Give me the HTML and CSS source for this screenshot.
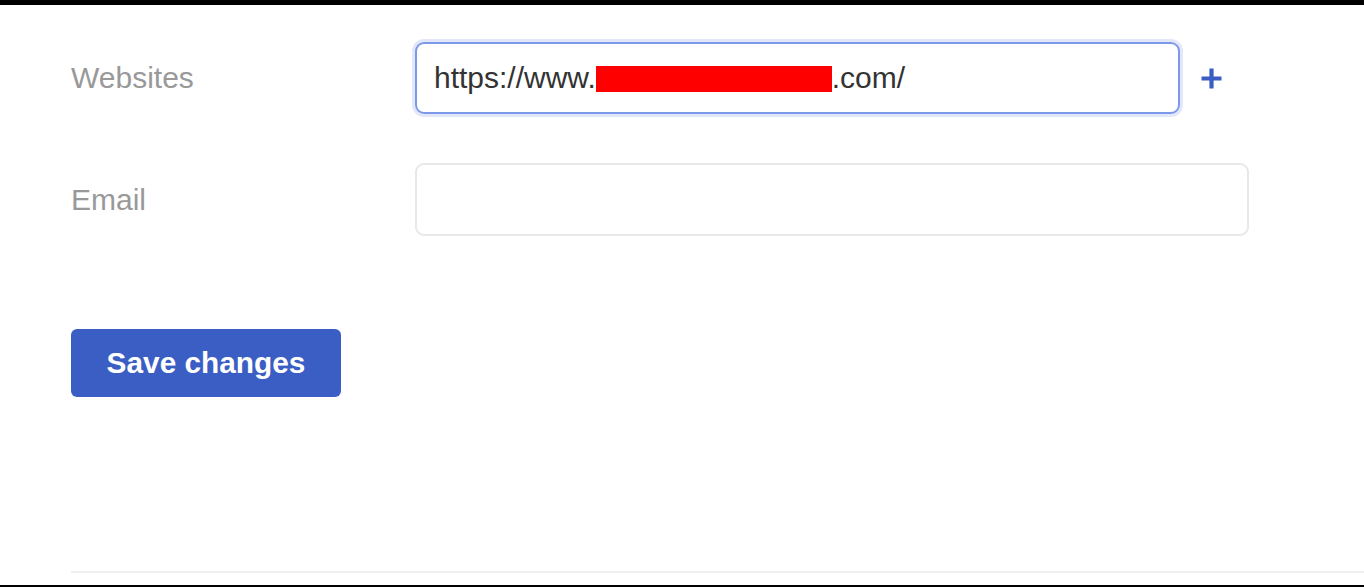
FILE: index.html
```html
<!DOCTYPE html>
<html lang="en">
<head>
<meta charset="utf-8">
<title>Settings</title>
<link rel="stylesheet" href="styles.css">
</head>
<body>
<div class="topbar"></div>
<main class="page">
  <form class="form">
    <div class="row row-websites">
      <label class="label">Websites</label>
      <div class="field-group">
        <div class="input input-focus"><span class="val">https://www.</span><span class="redact"></span><span class="val">.com/</span></div>
        <button type="button" class="add" aria-label="Add website">
          <svg width="23" height="23" viewBox="0 0 23 23"><path d="M11.5 1.5v20M1.5 11.5h20" stroke="#3b5dc4" stroke-width="4.2" stroke-linecap="butt" fill="none"/></svg>
        </button>
      </div>
    </div>
    <div class="row row-email">
      <label class="label">Email</label>
      <div class="field-group">
        <div class="input input-email"></div>
      </div>
    </div>
    <div class="actions">
      <button type="button" class="save">Save changes</button>
    </div>
  </form>
  <div class="divider"></div>
</main>
<div class="bottombar"></div>
</body>
</html>
```

FILE: styles.css
```css
html, body {
  margin: 0;
  padding: 0;
  background: #fff;
  font-family: "Liberation Sans", Arial, sans-serif;
}
.topbar {
  height: 5px;
  background: #000;
}
.page {
  padding-left: 71px;
  height: 580px;
  display: flex;
  flex-direction: column;
}
.form {
  display: flex;
  flex-direction: column;
  padding-top: 37px;
}
.row {
  display: flex;
  align-items: center;
}
.row-email {
  margin-top: 49px;
}
.label {
  width: 344px;
  flex: none;
  font-size: 30px;
  color: #999;
}
.field-group {
  display: flex;
  align-items: center;
}
.input {
  box-sizing: border-box;
  height: 72px;
  border: 2px solid #e6e6e6;
  border-radius: 9px;
  display: flex;
  align-items: center;
  padding-left: 17px;
  font-size: 30px;
  color: #333;
}
.input-focus {
  width: 765px;
  border-color: #7d98ea;
  box-shadow: 0 0 0 3px rgba(125, 152, 234, 0.22);
}
.input-email {
  width: 834px;
  height: 73px;
  border-color: #e8e8e8;
}
.redact {
  display: inline-block;
  width: 236px;
  height: 26px;
  background: #ff0000;
  margin-top: 1px;
}
.add {
  margin-left: 20px;
  padding: 0;
  border: 0;
  background: none;
  width: 23px;
  height: 23px;
  display: flex;
}
.actions {
  margin-top: 93px;
}
.save {
  width: 270px;
  height: 68px;
  border: 0;
  border-radius: 6px;
  background: #3b5ec4;
  color: #fff;
  font-family: "Liberation Sans", Arial, sans-serif;
  font-weight: bold;
  font-size: 29.8px;
  padding: 0;
}
.divider {
  margin-top: auto;
  height: 2px;
  background: #f0f0f0;
  margin-bottom: 12px;
}
.bottombar {
  height: 2px;
  background: #000;
}
```
